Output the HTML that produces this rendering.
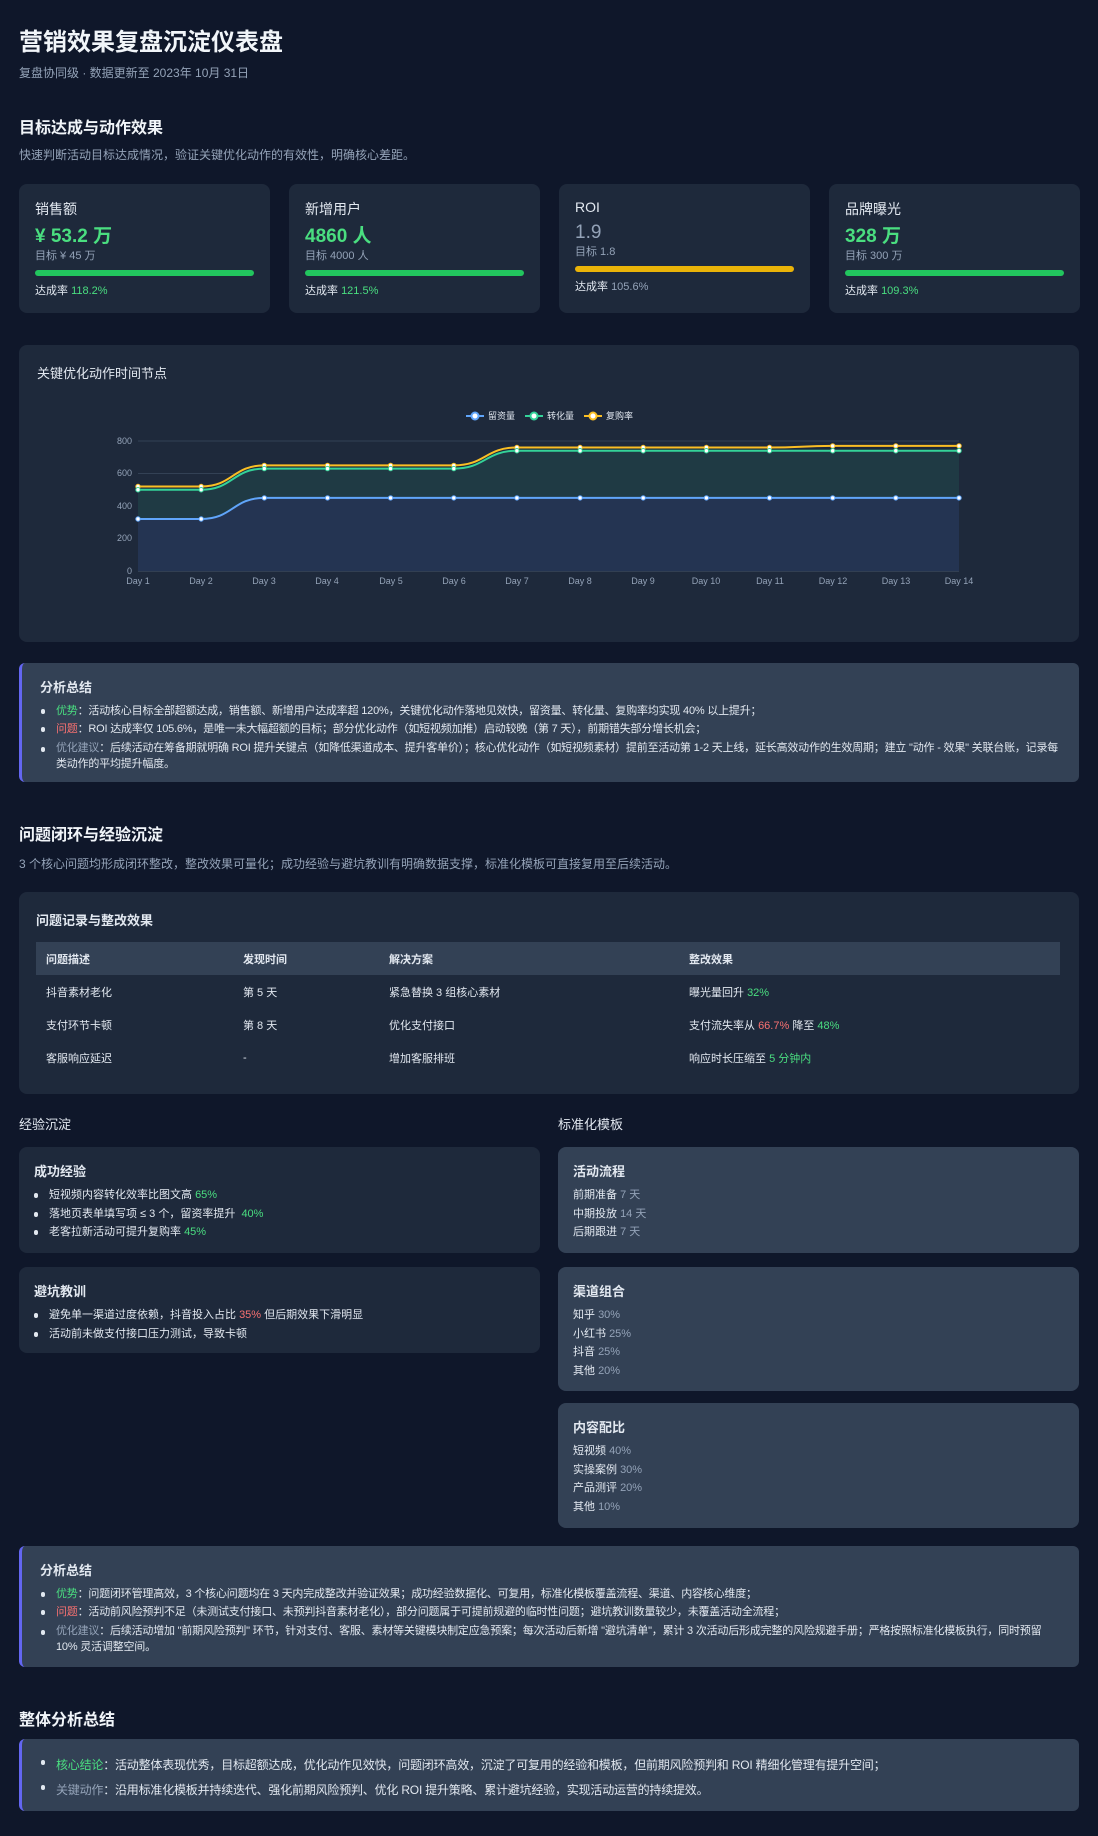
<!DOCTYPE html>
<html><head><meta charset="utf-8"><style>
*{margin:0;padding:0;box-sizing:border-box}
body{width:1098px;height:1836px;background:#0f172a;font-family:"Liberation Sans","Noto Sans CJK SC",sans-serif;color:#e2e8f0;position:relative;overflow:hidden}
.a{position:absolute}
h1{position:absolute;left:19px;top:22px;font-size:24px;font-weight:700;color:#f1f5f9}
.sub{font-size:12px;color:#94a3b8}
.h2{font-size:16px;font-weight:700;color:#f1f5f9}
.card{position:absolute;background:#1e293b;border-radius:8px}
.kpi{top:184px;width:251px;height:129px;padding:13px 16px}
.kpi .l{font-size:14px;color:#e2e8f0;margin-top:2px}
.kpi .v{font-size:19px;font-weight:700;color:#4ade80;margin-top:6px;line-height:24px}
.kpi .t{font-size:11px;color:#94a3b8;line-height:14px}
.kpi .bar{height:6px;border-radius:3px;background:#22c55e;margin-top:7px}
.kpi .r{font-size:11px;color:#e2e8f0;margin-top:6px}
.g{color:#4ade80}.rd{color:#f87171}.m{color:#94a3b8}
.box{position:absolute;left:19px;width:1060px;background:#334155;border-left:3px solid #6366f1;border-radius:6px;padding:14px 18px}
.box .tt{font-size:13px;font-weight:700;color:#e2e8f0;margin-bottom:6px}
.box ul{list-style:none}
.box li{position:relative;padding-left:16px;font-size:11px;line-height:18px;color:#e2e8f0;letter-spacing:-0.2px}
.box li:before{content:"";position:absolute;left:1px;top:7px;width:4px;height:5px;border-radius:2px;background:#e2e8f0}
table{border-collapse:collapse;width:1024px;font-size:11px}
th{background:#334155;text-align:left;height:33px;padding-left:10px;font-weight:700;color:#e2e8f0}
td{height:33px;padding-left:10px;color:#e2e8f0}
.sc{padding:14px 15px}
.sc .tt{font-size:13px;font-weight:700;margin-bottom:6px}
.sc ul{list-style:none}
.sc li{position:relative;padding-left:15px;font-size:11px;line-height:18.5px}
.sc li:before{content:"";position:absolute;left:0;top:7px;width:4px;height:5px;border-radius:2px;background:#e2e8f0}
.rc{background:#334155}
.rc div.i{font-size:11px;line-height:18.5px}
</style></head><body>
<h1>营销效果复盘沉淀仪表盘</h1>
<div class="a sub" style="left:19px;top:64px">复盘协同级 · 数据更新至 2023年 10月 31日</div>
<div class="a h2" style="left:19px;top:114px">目标达成与动作效果</div>
<div class="a sub" style="left:19px;top:146px">快速判断活动目标达成情况，验证关键优化动作的有效性，明确核心差距。</div>

<div class="card kpi" style="left:19px"><div class="l">销售额</div><div class="v">¥ 53.2 万</div><div class="t">目标 ¥ 45 万</div><div class="bar"></div><div class="r">达成率 <span class="g">118.2%</span></div></div>
<div class="card kpi" style="left:289px"><div class="l">新增用户</div><div class="v">4860 人</div><div class="t">目标 4000 人</div><div class="bar"></div><div class="r">达成率 <span class="g">121.5%</span></div></div>
<div class="card kpi" style="left:559px"><div class="l">ROI</div><div class="v" style="color:#94a3b8;font-weight:400">1.9</div><div class="t">目标 1.8</div><div class="bar" style="background:#eab308"></div><div class="r">达成率 <span class="m">105.6%</span></div></div>
<div class="card kpi" style="left:829px"><div class="l">品牌曝光</div><div class="v">328 万</div><div class="t">目标 300 万</div><div class="bar"></div><div class="r">达成率 <span class="g">109.3%</span></div></div>

<div class="card" style="left:19px;top:345px;width:1060px;height:297px">
<svg width="1060" height="297" viewBox="19 345 1060 297" style="position:absolute;left:0;top:0" font-family="Liberation Sans, Noto Sans CJK SC, sans-serif">
<text x="37" y="378" font-size="13" fill="#e2e8f0">关键优化动作时间节点</text>
<g stroke="#334155" stroke-width="1">
<line x1="138" y1="441" x2="959" y2="441"/><line x1="138" y1="473.5" x2="959" y2="473.5"/><line x1="138" y1="506" x2="959" y2="506"/><line x1="138" y1="538.5" x2="959" y2="538.5"/><line x1="138" y1="571" x2="959" y2="571" stroke="#475569"/>
</g>
<g font-size="9" fill="#94a3b8" text-anchor="end"><text x="132" y="444">800</text><text x="132" y="476">600</text><text x="132" y="509">400</text><text x="132" y="541">200</text><text x="132" y="574">0</text></g>
<g font-size="9" fill="#94a3b8" text-anchor="middle">
<text x="138" y="584">Day 1</text><text x="201" y="584">Day 2</text><text x="264" y="584">Day 3</text><text x="327" y="584">Day 4</text><text x="391" y="584">Day 5</text><text x="454" y="584">Day 6</text><text x="517" y="584">Day 7</text><text x="580" y="584">Day 8</text><text x="643" y="584">Day 9</text><text x="706" y="584">Day 10</text><text x="770" y="584">Day 11</text><text x="833" y="584">Day 12</text><text x="896" y="584">Day 13</text><text x="959" y="584">Day 14</text></g>
<path d="M138 489.75 L201.2 489.75 C232.7 489.75 232.7 468.6 264.3 468.6 L453.8 468.6 C485.3 468.6 485.3 450.75 516.9 450.75 L959 450.75 L959 571 L138 571Z" fill="#1f3a44"/>
<path d="M138 519 L201.2 519 C232.7 519 232.7 497.9 264.3 497.9 L959 497.9 L959 571 L138 571Z" fill="#243452"/>
<path d="M138 486.5 L201.2 486.5 C232.7 486.5 232.7 465.4 264.3 465.4 L453.8 465.4 C485.3 465.4 485.3 447.5 516.9 447.5 L769.5 447.5 C801 447.5 801 445.9 832.7 445.9 L959 445.9" fill="none" stroke="#fbbf24" stroke-width="2"/>
<path d="M138 489.75 L201.2 489.75 C232.7 489.75 232.7 468.6 264.3 468.6 L453.8 468.6 C485.3 468.6 485.3 450.75 516.9 450.75 L959 450.75" fill="none" stroke="#34d399" stroke-width="2"/>
<path d="M138 519 L201.2 519 C232.7 519 232.7 497.9 264.3 497.9 L959 497.9" fill="none" stroke="#60a5fa" stroke-width="2"/>
<g fill="#fff">
<g stroke="#fbbf24" stroke-width="1"><circle cx="138" cy="486.5" r="2.2"/><circle cx="201.2" cy="486.5" r="2.2"/><circle cx="264.3" cy="465.4" r="2.2"/><circle cx="327.5" cy="465.4" r="2.2"/><circle cx="390.6" cy="465.4" r="2.2"/><circle cx="453.8" cy="465.4" r="2.2"/><circle cx="516.9" cy="447.5" r="2.2"/><circle cx="580.1" cy="447.5" r="2.2"/><circle cx="643.2" cy="447.5" r="2.2"/><circle cx="706.4" cy="447.5" r="2.2"/><circle cx="769.5" cy="447.5" r="2.2"/><circle cx="832.7" cy="445.9" r="2.2"/><circle cx="895.8" cy="445.9" r="2.2"/><circle cx="959" cy="445.9" r="2.2"/></g>
<g stroke="#34d399" stroke-width="1"><circle cx="138" cy="489.75" r="2.2"/><circle cx="201.2" cy="489.75" r="2.2"/><circle cx="264.3" cy="468.6" r="2.2"/><circle cx="327.5" cy="468.6" r="2.2"/><circle cx="390.6" cy="468.6" r="2.2"/><circle cx="453.8" cy="468.6" r="2.2"/><circle cx="516.9" cy="450.75" r="2.2"/><circle cx="580.1" cy="450.75" r="2.2"/><circle cx="643.2" cy="450.75" r="2.2"/><circle cx="706.4" cy="450.75" r="2.2"/><circle cx="769.5" cy="450.75" r="2.2"/><circle cx="832.7" cy="450.75" r="2.2"/><circle cx="895.8" cy="450.75" r="2.2"/><circle cx="959" cy="450.75" r="2.2"/></g>
<g stroke="#60a5fa" stroke-width="1"><circle cx="138" cy="519" r="2.2"/><circle cx="201.2" cy="519" r="2.2"/><circle cx="264.3" cy="497.9" r="2.2"/><circle cx="327.5" cy="497.9" r="2.2"/><circle cx="390.6" cy="497.9" r="2.2"/><circle cx="453.8" cy="497.9" r="2.2"/><circle cx="516.9" cy="497.9" r="2.2"/><circle cx="580.1" cy="497.9" r="2.2"/><circle cx="643.2" cy="497.9" r="2.2"/><circle cx="706.4" cy="497.9" r="2.2"/><circle cx="769.5" cy="497.9" r="2.2"/><circle cx="832.7" cy="497.9" r="2.2"/><circle cx="895.8" cy="497.9" r="2.2"/><circle cx="959" cy="497.9" r="2.2"/></g>
</g>
<g font-size="9" fill="#e2e8f0">
<line x1="466" y1="416" x2="484" y2="416" stroke="#60a5fa" stroke-width="2"/><circle cx="475" cy="416" r="3.5" fill="#fff" stroke="#60a5fa" stroke-width="2"/><text x="488" y="419">留资量</text>
<line x1="525" y1="416" x2="543" y2="416" stroke="#34d399" stroke-width="2"/><circle cx="534" cy="416" r="3.5" fill="#fff" stroke="#34d399" stroke-width="2"/><text x="547" y="419">转化量</text>
<line x1="584" y1="416" x2="602" y2="416" stroke="#fbbf24" stroke-width="2"/><circle cx="593" cy="416" r="3.5" fill="#fff" stroke="#fbbf24" stroke-width="2"/><text x="606" y="419">复购率</text>
</g>
</svg></div>

<div class="box" style="top:663px;height:119px">
<div class="tt">分析总结</div>
<ul>
<li><span class="g">优势</span>：活动核心目标全部超额达成，销售额、新增用户达成率超 120%，关键优化动作落地见效快，留资量、转化量、复购率均实现 40% 以上提升；</li>
<li><span class="rd">问题</span>：ROI 达成率仅 105.6%，是唯一未大幅超额的目标；部分优化动作（如短视频加推）启动较晚（第 7 天），前期错失部分增长机会；</li>
<li style="line-height:16px;margin-top:2px"><span class="m">优化建议</span>：后续活动在筹备期就明确 ROI 提升关键点（如降低渠道成本、提升客单价）；核心优化动作（如短视频素材）提前至活动第 1-2 天上线，延长高效动作的生效周期；建立 "动作 - 效果" 关联台账，记录每类动作的平均提升幅度。</li>
</ul></div>

<div class="a h2" style="left:19px;top:821px">问题闭环与经验沉淀</div>
<div class="a sub" style="left:19px;top:855px">3 个核心问题均形成闭环整改，整改效果可量化；成功经验与避坑教训有明确数据支撑，标准化模板可直接复用至后续活动。</div>

<div class="card" style="left:19px;top:892px;width:1060px;height:202px;padding:18px 17px">
<div style="font-size:13px;font-weight:700;margin-bottom:13px">问题记录与整改效果</div>
<table>
<tr><th style="width:197px">问题描述</th><th style="width:146px">发现时间</th><th style="width:300px">解决方案</th><th>整改效果</th></tr>
<tr><td>抖音素材老化</td><td>第 5 天</td><td>紧急替换 3 组核心素材</td><td>曝光量回升 <span class="g">32%</span></td></tr>
<tr><td>支付环节卡顿</td><td>第 8 天</td><td>优化支付接口</td><td>支付流失率从 <span class="rd">66.7%</span> 降至 <span class="g">48%</span></td></tr>
<tr><td>客服响应延迟</td><td>-</td><td>增加客服排班</td><td>响应时长压缩至 <span class="g">5 分钟内</span></td></tr>
</table></div>

<div class="a" style="left:19px;top:1114px;font-size:13px">经验沉淀</div>
<div class="a" style="left:558px;top:1114px;font-size:13px">标准化模板</div>

<div class="card sc" style="left:19px;top:1147px;width:521px;height:106px">
<div class="tt">成功经验</div><ul>
<li>短视频内容转化效率比图文高 <span class="g">65%</span></li>
<li>落地页表单填写项 ≤ 3 个，留资率提升 &nbsp;<span class="g">40%</span></li>
<li>老客拉新活动可提升复购率 <span class="g">45%</span></li></ul></div>
<div class="card sc" style="left:19px;top:1267px;width:521px;height:86px">
<div class="tt">避坑教训</div><ul>
<li>避免单一渠道过度依赖，抖音投入占比 <span class="rd">35%</span> 但后期效果下滑明显</li>
<li>活动前未做支付接口压力测试，导致卡顿</li></ul></div>

<div class="card sc rc" style="left:558px;top:1147px;width:521px;height:106px">
<div class="tt">活动流程</div>
<div class="i">前期准备 <span class="m">7 天</span></div><div class="i">中期投放 <span class="m">14 天</span></div><div class="i">后期跟进 <span class="m">7 天</span></div></div>
<div class="card sc rc" style="left:558px;top:1267px;width:521px;height:124px">
<div class="tt">渠道组合</div>
<div class="i">知乎 <span class="m">30%</span></div><div class="i">小红书 <span class="m">25%</span></div><div class="i">抖音 <span class="m">25%</span></div><div class="i">其他 <span class="m">20%</span></div></div>
<div class="card sc rc" style="left:558px;top:1403px;width:521px;height:125px">
<div class="tt">内容配比</div>
<div class="i">短视频 <span class="m">40%</span></div><div class="i">实操案例 <span class="m">30%</span></div><div class="i">产品测评 <span class="m">20%</span></div><div class="i">其他 <span class="m">10%</span></div></div>

<div class="box" style="top:1546px;height:121px">
<div class="tt">分析总结</div>
<ul>
<li><span class="g">优势</span>：问题闭环管理高效，3 个核心问题均在 3 天内完成整改并验证效果；成功经验数据化、可复用，标准化模板覆盖流程、渠道、内容核心维度；</li>
<li><span class="rd">问题</span>：活动前风险预判不足（未测试支付接口、未预判抖音素材老化），部分问题属于可提前规避的临时性问题；避坑教训数量较少，未覆盖活动全流程；</li>
<li style="line-height:16px;margin-top:2px"><span class="m">优化建议</span>：后续活动增加 "前期风险预判" 环节，针对支付、客服、素材等关键模块制定应急预案；每次活动后新增 "避坑清单"，累计 3 次活动后形成完整的风险规避手册；严格按照标准化模板执行，同时预留 10% 灵活调整空间。</li>
</ul></div>

<div class="a h2" style="left:19px;top:1706px">整体分析总结</div>
<div class="box" style="top:1739px;height:72px;padding-top:14px">
<ul>
<li style="font-size:12px;line-height:25px"><span class="g">核心结论</span>：活动整体表现优秀，目标超额达成，优化动作见效快，问题闭环高效，沉淀了可复用的经验和模板，但前期风险预判和 ROI 精细化管理有提升空间；</li>
<li style="font-size:12px;line-height:25px"><span class="m">关键动作</span>：沿用标准化模板并持续迭代、强化前期风险预判、优化 ROI 提升策略、累计避坑经验，实现活动运营的持续提效。</li>
</ul></div>
</body></html>
